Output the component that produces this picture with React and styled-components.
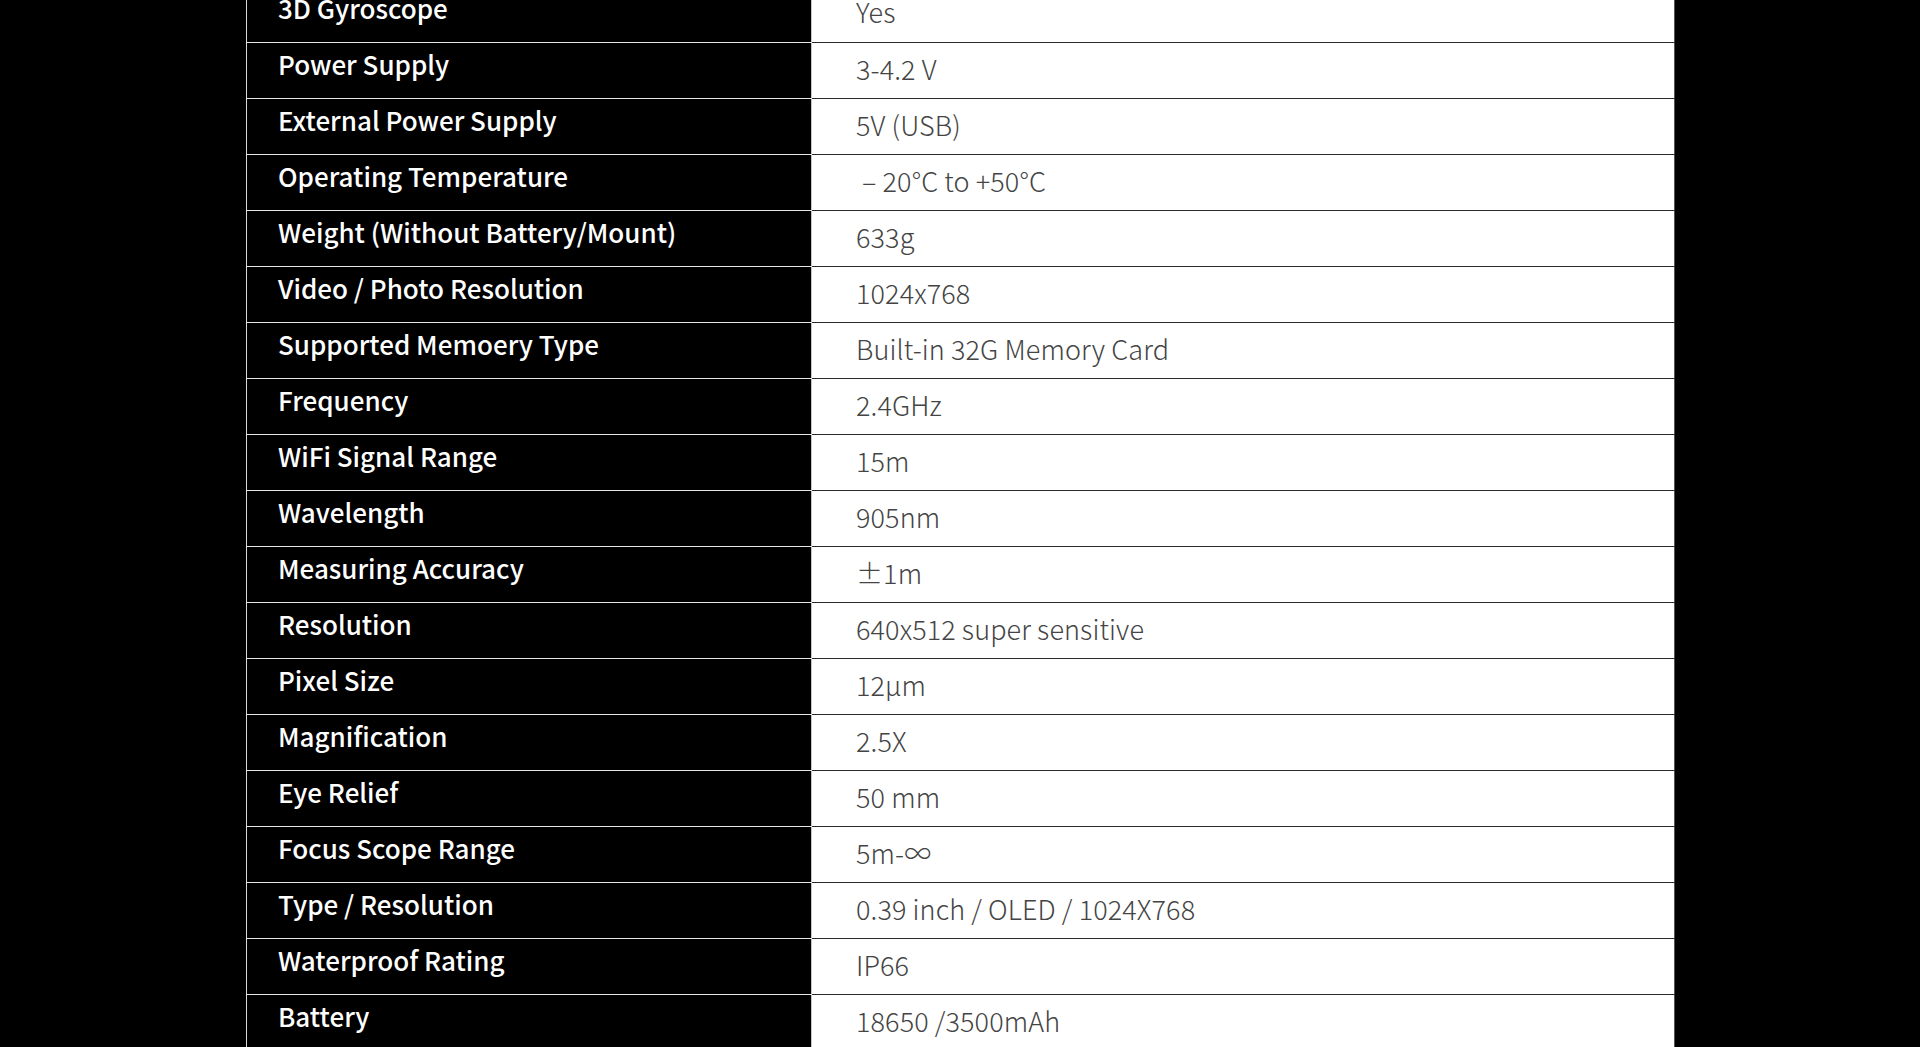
import React from 'react';
import styled, { createGlobalStyle } from 'styled-components';

const GlobalStyle = createGlobalStyle`
    html, body {
        margin: 0;
        padding: 0;
        background: #000;
        overflow: hidden;
    }
    body {
        font-family: "Noto Sans CJK SC", "Noto Sans", sans-serif;
    }
`;

const Page = styled.div`
    width: 1920px;
    height: 1047px;
    background: #000;
    overflow: hidden;
`;

// 스크롤된 상태라 첫 줄이 잘려 보임
const SpecTable = styled.table`
    margin-top: -14px;
    margin-left: 246px;
    width: 1429px;
    border-collapse: collapse;
    table-layout: fixed;
`;

const Row = styled.tr`
    height: 56px;
`;

const Key = styled.td`
    width: 565px;
    box-sizing: border-box;
    padding: 0 0 13px 31px;
    background: #000;
    color: #fff;
    font-size: 26px;
    font-weight: 500;
    border-left: 1px solid #d8d8d8;
    border-bottom: 1px solid #e6e6e6;
    vertical-align: middle;
    white-space: nowrap;
`;

const Value = styled.td`
    box-sizing: border-box;
    padding: 0 0 4px 44px;
    background: #fff;
    color: #444;
    font-size: 27px;
    font-weight: 300;
    letter-spacing: 0.1px;
    border-left: 1px solid #c8c8c8;
    border-right: 1px solid #555;
    border-bottom: 1px solid #2a2a2a;
    vertical-align: middle;
    white-space: pre;
`;

const specs = [
    ['3D Gyroscope', 'Yes'],
    ['Power Supply', '3-4.2 V'],
    ['External Power Supply', '5V (USB)'],
    ['Operating Temperature', ' – 20°C to +50°C'],
    ['Weight (Without Battery/Mount)', '633g'],
    ['Video / Photo Resolution', '1024x768'],
    ['Supported Memoery Type', 'Built-in 32G Memory Card'],
    ['Frequency', '2.4GHz'],
    ['WiFi Signal Range', '15m'],
    ['Wavelength', '905nm'],
    ['Measuring Accuracy', '±1m'],
    ['Resolution', '640x512 super sensitive'],
    ['Pixel Size', '12μm'],
    ['Magnification', '2.5X'],
    ['Eye Relief', '50 mm'],
    ['Focus Scope Range', '5m-∞'],
    ['Type / Resolution', '0.39 inch / OLED / 1024X768'],
    ['Waterproof Rating', 'IP66'],
    ['Battery', '18650 /3500mAh'],
];

const App = () => {
    return (
        <>
            <GlobalStyle />
            <Page>
                <SpecTable>
                    <tbody>
                        {specs.map(([name, value]) => (
                            <Row key={name}>
                                <Key>{name}</Key>
                                <Value>{value}</Value>
                            </Row>
                        ))}
                    </tbody>
                </SpecTable>
            </Page>
        </>
    );
};

export default App;
